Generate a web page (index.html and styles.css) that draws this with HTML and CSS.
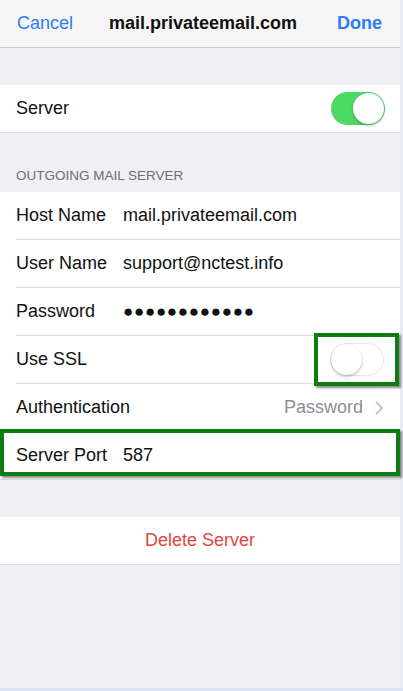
FILE: index.html
```html
<!DOCTYPE html>
<html>
<head>
<meta charset="utf-8">
<link rel="stylesheet" href="styles.css">
</head>
<body>
<div class="screen">
  <header class="nav">
    <span class="nav-btn">Cancel</span>
    <span class="nav-title">mail.privateemail.com</span>
    <span class="nav-btn nav-done">Done</span>
  </header>
  <div class="spacer"></div>
  <section class="group">
    <div class="row">
      <span class="label">Server</span>
      <span class="toggle on"><span class="knob"></span></span>
    </div>
  </section>
  <div class="section-header">OUTGOING MAIL SERVER</div>
  <section class="group">
    <div class="row"><span class="label fixed">Host Name</span><span class="value">mail.privateemail.com</span></div>
    <div class="row"><span class="label fixed">User Name</span><span class="value">support@nctest.info</span></div>
    <div class="row"><span class="label fixed">Password</span><span class="value dots">●●●●●●●●●●●●</span></div>
    <div class="row">
      <span class="label">Use SSL</span>
      <span class="toggle off"><span class="knob"></span></span>
      <span class="hl hl-toggle"></span>
    </div>
    <div class="row"><span class="label">Authentication</span><span class="detail">Password</span><span class="chev"><svg width="9" height="14" viewBox="0 0 9 14"><path d="M1.5 1.5 L7 7 L1.5 12.5" fill="none" stroke="#c4c4c8" stroke-width="1.8" stroke-linecap="round" stroke-linejoin="round"/></svg></span></div>
    <div class="row"><span class="label fixed">Server Port</span><span class="value">587</span><span class="hl hl-row"></span></div>
  </section>
  <div class="spacer"></div>
  <section class="group">
    <div class="row center"><span class="danger">Delete Server</span></div>
  </section>
</div>
</body>
</html>
```
FILE: styles.css
```css
html, body { margin: 0; padding: 0; }
body {
  background: #dbe5f2;
  width: 403px;
  height: 691px;
  overflow: hidden;
  font-family: "Liberation Sans", Arial, sans-serif;
}
.screen {
  width: 400px;
  height: 688px;
  background: #efeff4;
  display: flex;
  flex-direction: column;
  border-right: 3px solid #e7ecf4;
}
.nav {
  height: 47px;
  flex: none;
  background: #f6f6f7;
  border-bottom: 1px solid #c9c9cc;
  display: flex;
  align-items: center;
  justify-content: space-between;
  padding: 0 18px 0 17px;
}
.nav-btn { color: #2f7cf6; font-size: 18px; }
.nav-done { font-weight: bold; }
.nav-title { font-weight: bold; font-size: 18px; color: #111; margin-left: -4px; }
.spacer { height: 37px; flex: none; }
.group {
  background: #fff;
  border-bottom: 1px solid #dcdce0;
}
.row {
  position: relative;
  height: 47px;
  margin-left: 16px;
  padding-right: 16px;
  display: flex;
  align-items: center;
  border-bottom: 1px solid #dcdce0;
  font-size: 18px;
  color: #111;
}
.group > .row:last-child { border-bottom: none; }
.label { white-space: nowrap; }
.label.fixed { width: 107px; flex: none; }
.value { color: #111; }
.dots { font-size: 17px; letter-spacing: 0.7px; }
.detail { margin-left: auto; color: #8e8e93; }
.chev { margin-left: 12px; display: flex; align-items: center; }
.center { justify-content: center; margin-left: 0; padding-right: 0; }
.danger { color: #e6453b; font-size: 18px; }
.section-header {
  height: 59px;
  flex: none;
  box-sizing: border-box;
  display: flex;
  align-items: flex-end;
  padding: 0 0 9px 16px;
  font-size: 13.5px;
  color: #6d6d72;
}
.toggle {
  margin-left: auto;
  width: 54px;
  height: 33px;
  box-sizing: border-box;
  border-radius: 17px;
  position: relative;
  flex: none;
}
.toggle.on { background: #4cd964; margin-right: -1px; }
.toggle.off { background: #fff; border: 1.5px solid #e5e5ea; }
.knob {
  position: absolute;
  top: 1px;
  width: 31px;
  height: 31px;
  border-radius: 50%;
  background: #fff;
  box-shadow: 0 2px 3px rgba(0,0,0,0.2), 0 0 0 0.5px rgba(0,0,0,0.08);
}
.toggle.on .knob { right: 1px; }
.toggle.off .knob { left: -0.5px; top: -0.5px; }
.hl {
  position: absolute;
  border: 4px solid #0e7d10;
  box-shadow: 2px 2px 2px rgba(0,0,0,0.45);
  pointer-events: none;
}
.hl-toggle { left: 298px; top: -3px; width: 77px; height: 45px; }
.hl-row { left: -16px; top: -3px; width: 392px; height: 39px; }
```
